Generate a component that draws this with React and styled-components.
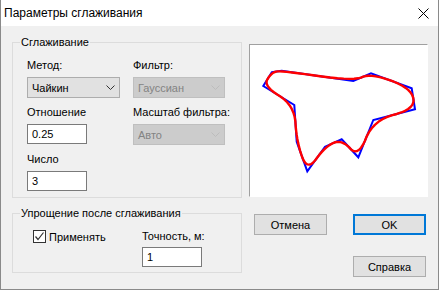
import styled, { createGlobalStyle } from "styled-components";

const GlobalStyle = createGlobalStyle`
  html, body {
    margin: 0;
    padding: 0;
    background: #ffffff;
  }
  body {
    font-family: "Liberation Sans", Arial, sans-serif;
    font-size: 11px;
    color: #000000;
  }
  * {
    box-sizing: border-box;
  }
`;

// outline of the source polygon, in preview coordinates
const source = [
  [21.7, 27.3],
  [31.7, 25.7],
  [103.3, 36],
  [121, 28.3],
  [161.7, 43.3],
  [165, 64.3],
  [123.3, 75],
  [108.3, 112.3],
  [91.7, 94.3],
  [75, 101.7],
  [57.3, 126.3],
  [46.7, 96.7],
  [44.3, 60],
  [13.3, 41],
];

const chaikin = (pts, ratio, times) => {
  let out = pts;
  for (let t = 0; t < times; t++) {
    const next = [];
    for (let i = 0; i < out.length; i++) {
      const p = out[i];
      const q = out[(i + 1) % out.length];
      next.push([p[0] * (1 - ratio) + q[0] * ratio, p[1] * (1 - ratio) + q[1] * ratio]);
      next.push([p[0] * ratio + q[0] * (1 - ratio), p[1] * ratio + q[1] * (1 - ratio)]);
    }
    out = next;
  }
  return out;
};

const toPoints = (pts) => pts.map((p) => p.join(",")).join(" ");

const Chevron = ({ disabled }) => (
  <svg width="9" height="5" viewBox="0 0 9 5">
    <polyline
      points="0.5,0.5 4.5,4.5 8.5,0.5"
      fill="none"
      stroke={disabled ? "#bcbcbc" : "#333333"}
      strokeWidth="1"
    />
  </svg>
);

const Select = ({ value, disabled }) => (
  <Combo $disabled={disabled}>
    <span>{value}</span>
    <Chevron disabled={disabled} />
  </Combo>
);

export default function App() {
  const smooth = chaikin(source, 0.25, 3);

  return (
    <>
      <GlobalStyle />
      <Window>
        <TitleBar>
          <TitleText>Параметры сглаживания</TitleText>
          <CloseButton>
            <svg width="11" height="11" viewBox="0 0 11 11">
              <path d="M0.5 0.5 L10.5 10.5 M10.5 0.5 L0.5 10.5" stroke="#000" strokeWidth="1" />
            </svg>
          </CloseButton>
        </TitleBar>
        <Body>
          <LeftColumn>
            <Group>
              <GroupTitle>Сглаживание</GroupTitle>
              <FieldGrid>
                <Field>
                  <Label>Метод:</Label>
                  <Select value="Чайкин" />
                </Field>
                <Field>
                  <Label>Фильтр:</Label>
                  <Select value="Гауссиан" disabled />
                </Field>
                <Field>
                  <Label>Отношение</Label>
                  <Edit $width={60}>0.25</Edit>
                </Field>
                <Field>
                  <Label>Масштаб фильтра:</Label>
                  <Select value="Авто" disabled />
                </Field>
                <Field>
                  <Label>Число</Label>
                  <Edit $width={60}>3</Edit>
                </Field>
              </FieldGrid>
            </Group>
            <Group $second>
              <GroupTitle>Упрощение после сглаживания</GroupTitle>
              <SimplifyRow>
                <CheckRow>
                  <CheckBox>
                    <svg width="11" height="11" viewBox="0 0 11 11">
                      <polyline points="1.5,5.5 4,8.5 9.5,1.5" fill="none" stroke="#333" strokeWidth="1.2" />
                    </svg>
                  </CheckBox>
                  <span>Применять</span>
                </CheckRow>
                <Field $gap={3}>
                  <Label>Точность, м:</Label>
                  <Edit $width={60}>1</Edit>
                </Field>
              </SimplifyRow>
            </Group>
          </LeftColumn>
          <RightColumn>
            <Preview>
              <svg width="177" height="151" viewBox="0 0 177 151">
                <polygon points={toPoints(source)} fill="none" stroke="#0000ff" strokeWidth="2" strokeLinejoin="miter" />
                <polygon points={toPoints(smooth)} fill="none" stroke="#ff0000" strokeWidth="2.4" strokeLinejoin="round" />
              </svg>
            </Preview>
            <ButtonGrid>
              <Button>Отмена</Button>
              <Button $default>OK</Button>
              <Spacer />
              <Button>Справка</Button>
            </ButtonGrid>
          </RightColumn>
        </Body>
      </Window>
    </>
  );
}

const Window = styled.div`
  width: 439px;
  height: 290px;
  display: flex;
  flex-direction: column;
  border: 1px solid #8a8a8a;
  border-top: none;
  background: #f0f0f0;
`;

const TitleBar = styled.div`
  height: 26px;
  flex: none;
  background: #ffffff;
  display: flex;
  align-items: center;
  justify-content: space-between;
  padding: 0 9px 0 3px;
`;

const TitleText = styled.div`
  font-size: 12px;
  color: #000000;
`;

const CloseButton = styled.div`
  width: 11px;
  height: 11px;
  display: flex;
  margin-top: 1px;
`;

const Body = styled.div`
  flex: 1;
  display: flex;
  padding: 9px 0 0 11px;
`;

const LeftColumn = styled.div`
  width: 230px;
  display: flex;
  flex-direction: column;
`;

const Group = styled.fieldset`
  margin: ${({ $second }) => ($second ? "8px 0 0" : "0")};
  padding: ${({ $second }) => ($second ? "8px 6px 5px 14px" : "8px 6px 6px 14px")};
  border: 1px solid #dcdcdc;
  min-width: 0;
`;

const GroupTitle = styled.legend`
  margin-left: -7px;
  padding: 0 1px;
  line-height: 15px;
  font-size: 11px;
`;

const FieldGrid = styled.div`
  display: grid;
  grid-template-columns: 93px 92px;
  column-gap: 13px;
  row-gap: 7px;
`;

const Field = styled.div`
  display: flex;
  flex-direction: column;
  gap: ${({ $gap = 4 }) => $gap}px;
`;

const Label = styled.div`
  line-height: 15px;
  white-space: nowrap;
`;

const Combo = styled.div`
  height: 21px;
  display: flex;
  align-items: center;
  justify-content: space-between;
  padding: 0 4px 0 4px;
  border: 1px solid ${({ $disabled }) => ($disabled ? "#bfbfbf" : "#adadad")};
  background: ${({ $disabled }) => ($disabled ? "#cccccc" : "#e1e1e1")};
  color: ${({ $disabled }) => ($disabled ? "#838383" : "#000000")};
`;

const Edit = styled.div`
  width: ${({ $width }) => $width}px;
  height: 20px;
  display: flex;
  align-items: center;
  padding-left: 4px;
  border: 1px solid #7a7a7a;
  background: #ffffff;
`;

const SimplifyRow = styled.div`
  display: flex;
`;

const CheckRow = styled.div`
  width: 115px;
  height: 15px;
  padding-left: 6px;
  display: flex;
  align-items: center;
  gap: 3px;
`;

const CheckBox = styled.div`
  width: 13px;
  height: 13px;
  border: 1px solid #333333;
  background: #ffffff;
  display: flex;
  align-items: center;
  justify-content: center;
`;

const RightColumn = styled.div`
  margin-left: 7px;
  margin-top: 9px;
  display: flex;
  flex-direction: column;
`;

const Preview = styled.div`
  width: 179px;
  height: 153px;
  background: #ffffff;
  border-top: 1px solid #a0a0a0;
  border-left: 1px solid #a0a0a0;
  border-right: 1px solid #ffffff;
  border-bottom: 1px solid #ffffff;
`;

const ButtonGrid = styled.div`
  display: grid;
  grid-template-columns: 73px 73px;
  column-gap: 26px;
  row-gap: 21px;
  margin: 17px 0 0 5px;
`;

const Spacer = styled.div``;

const Button = styled.div`
  height: 21px;
  display: flex;
  align-items: center;
  justify-content: center;
  background: #e1e1e1;
  border: ${({ $default }) => ($default ? "2px solid #0078d7" : "1px solid #adadad")};
`;
